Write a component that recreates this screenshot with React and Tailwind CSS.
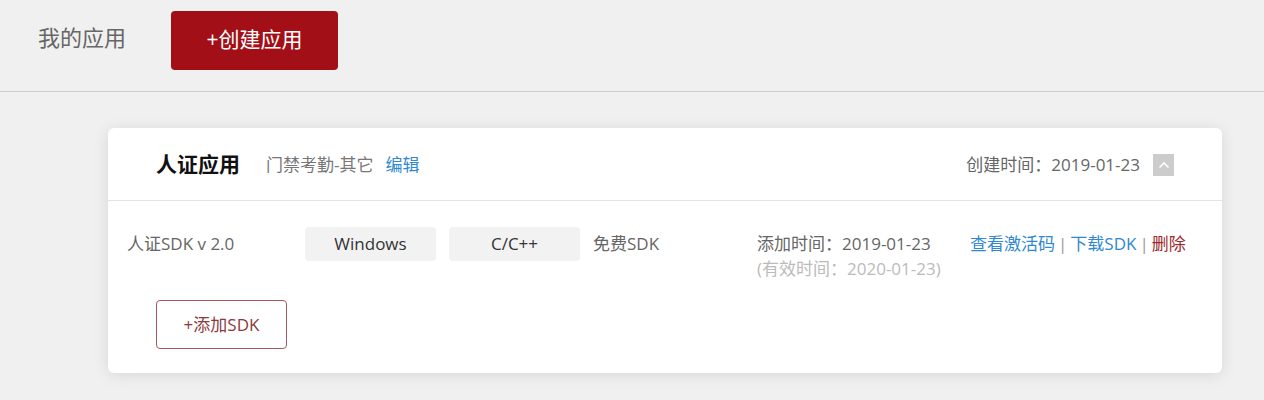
export default function App() {
  const font = { fontFamily: '"Open Sans", "Noto Sans CJK SC", sans-serif' };
  return (
    <div className="min-h-[400px] bg-[#f0f0f0] text-[#666666]" style={font}>
      <div className="h-[92px] border-b border-[#cccccc] pb-[11px] pl-[38px] flex items-center">
        <span className="text-[22px] text-[#666666] mb-[5px]">我的应用</span>
        <button className="ml-[45px] w-[167px] h-[59px] rounded-[4px] bg-[#a30f16] text-white text-[21px]">+创建应用</button>
      </div>
      <div className="ml-[108px] mt-[36px] w-[1114px] bg-white rounded-[6px] shadow-[0_2px_16px_rgba(0,0,0,0.10)]">
        <div className="h-[73px] border-b border-[#e3e3e3] flex items-center pl-[48px] pr-[48px] pt-[2px]">
          <span className="text-[21px] font-bold text-[#111111]">人证应用</span>
          <span className="ml-[26px] text-[17px] text-[#777777]">门禁考勤-其它</span>
          <span className="ml-[12px] text-[17px] text-[#2f88d0]">编辑</span>
          <span className="ml-auto text-[17px] text-[#666666]">创建时间：2019-01-23</span>
          <span className="ml-[13px] w-[21px] h-[22px] bg-[#cccccc] flex items-center justify-center">
            <svg width="12" height="8" viewBox="0 0 12 8" fill="none">
              <path d="M1.5 6.5 L6 2 L10.5 6.5" stroke="white" strokeWidth="1.6" />
            </svg>
          </span>
        </div>
        <div className="h-[99px] pl-[19px] pt-[26px] flex items-start text-[17px]">
          <span className="w-[178px] h-[34px] flex items-center text-[#666666]">人证SDK v 2.0</span>
          <span className="w-[131px] h-[34px] rounded-[4px] bg-[#f2f2f2] flex items-center justify-center text-[#333333]">Windows</span>
          <span className="ml-[13px] w-[131px] h-[34px] rounded-[4px] bg-[#f2f2f2] flex items-center justify-center text-[#333333]">C/C++</span>
          <span className="ml-[13px] w-[164px] h-[34px] flex items-center text-[#666666]">免费SDK</span>
          <div className="w-[213px] flex flex-col pt-[4px]">
            <span className="leading-[25px] text-[#666666]">添加时间：2019-01-23</span>
            <span className="leading-[25px] text-[#bbbbbb]">(有效时间：2020-01-23)</span>
          </div>
          <div className="h-[34px] flex items-center">
            <span className="text-[#2f88d0]">查看激活码</span>
            <span className="mx-[3px] text-[#999999]">|</span>
            <span className="text-[#2f88d0]">下载SDK</span>
            <span className="mx-[3px] text-[#999999]">|</span>
            <span className="text-[#9e2a2e]">删除</span>
          </div>
        </div>
        <div className="pl-[48px] pb-[24px]">
          <button className="w-[131px] h-[49px] rounded-[4px] border border-[#a5595c] text-[#8c3a3d] text-[17px]">+添加SDK</button>
        </div>
      </div>
    </div>
  );
}
